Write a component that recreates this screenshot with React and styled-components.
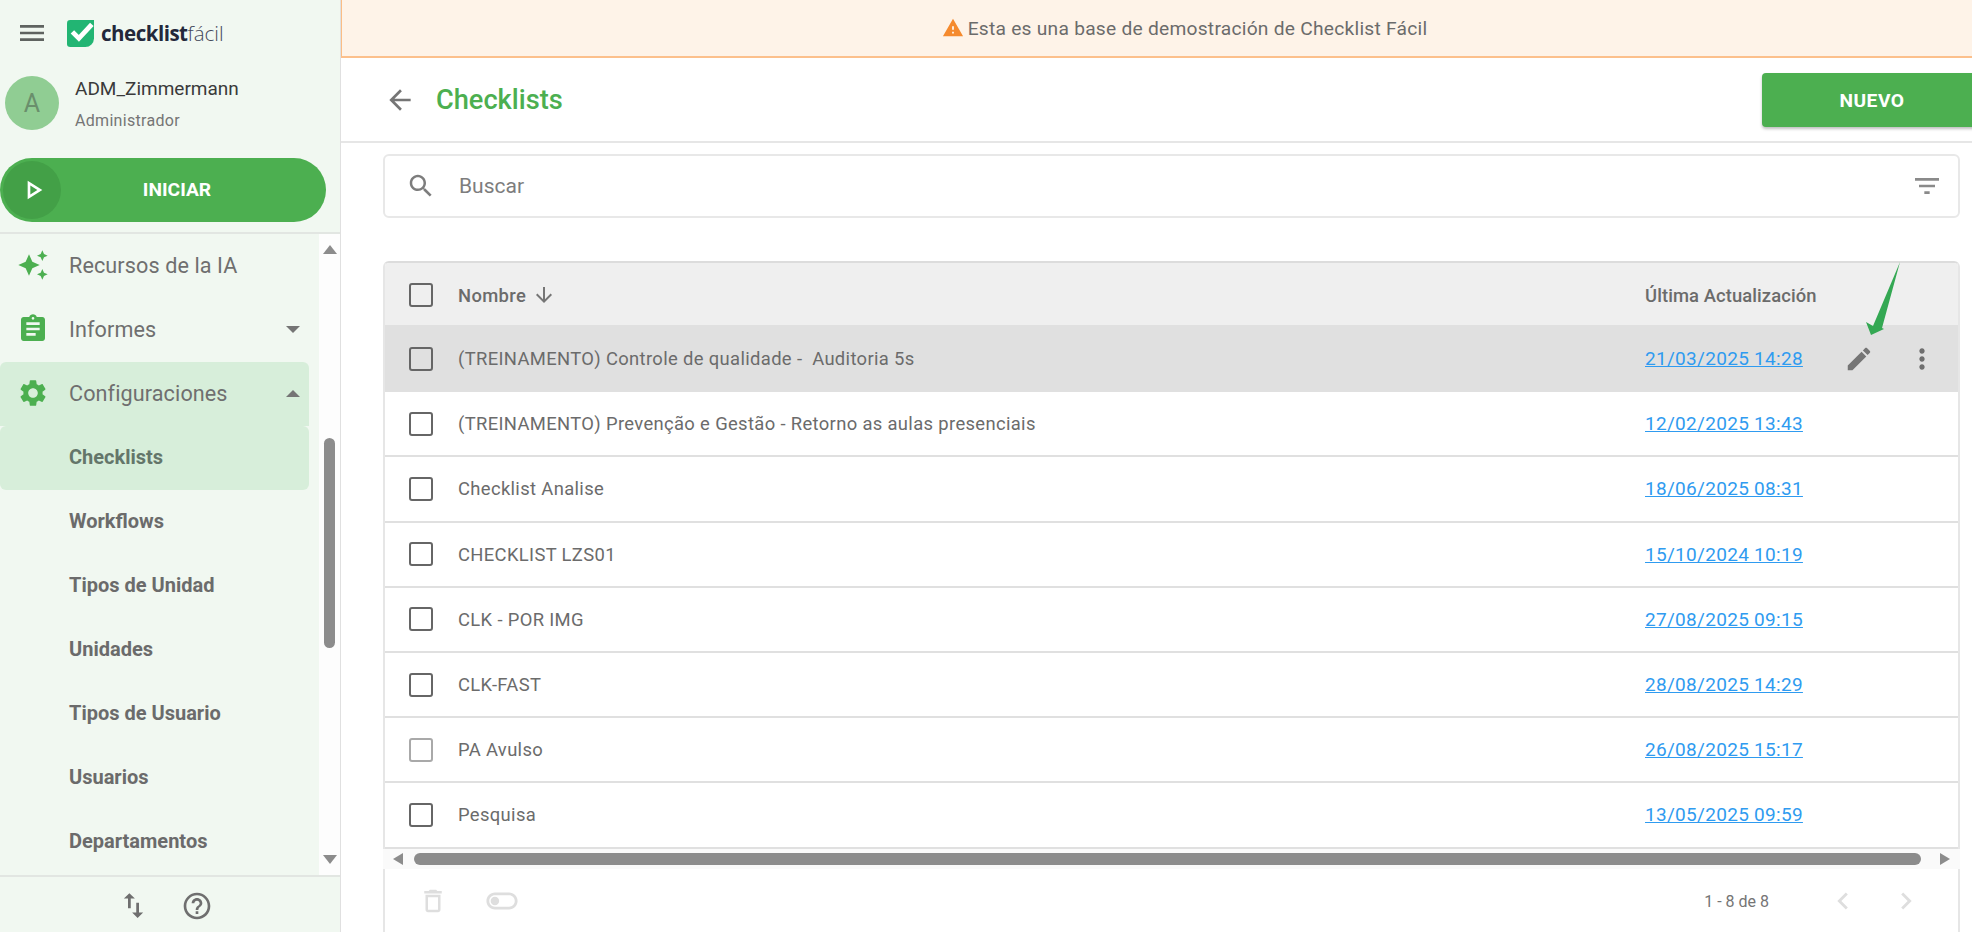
import React from 'react';
import styled, { createGlobalStyle } from 'styled-components';

const P = {
  menu: 'M3 18h18v-2H3v2zm0-5h18v-2H3v2zm0-7v2h18V6H3z',
  play: 'M10 8.64L15.27 12 10 15.36V8.64M8 5v14l11-7L8 5z',
  spark: 'M19 9l1.25-2.75L23 5l-2.75-1.25L19 1l-1.25 2.75L15 5l2.75 1.25L19 9zm-7.5.5L9 4 6.5 9.5 1 12l5.5 2.5L9 20l2.5-5.5L17 12l-5.5-2.5zM19 15l-1.25 2.75L15 19l2.75 1.25L19 23l1.25-2.75L23 19l-2.75-1.25L19 15z',
  assign: 'M19 3h-4.18C14.4 1.84 13.3 1 12 1c-1.3 0-2.4.84-2.82 2H5c-1.1 0-2 .9-2 2v14c0 1.1.9 2 2 2h14c1.1 0 2-.9 2-2V5c0-1.1-.9-2-2-2zm-7 0c.55 0 1 .45 1 1s-.45 1-1 1-1-.45-1-1 .45-1 1-1zm2 14H7v-2h7v2zm3-4H7v-2h10v2zm0-4H7V7h10v2z',
  gear: 'M19.14 12.94c.04-.3.06-.61.06-.94 0-.32-.02-.64-.07-.94l2.03-1.58c.18-.14.23-.41.12-.61l-1.92-3.32c-.12-.22-.37-.29-.59-.22l-2.39.96c-.5-.38-1.03-.7-1.62-.94l-.36-2.54c-.04-.24-.24-.41-.48-.41h-3.84c-.24 0-.43.17-.47.41l-.36 2.54c-.59.24-1.13.57-1.62.94l-2.39-.96c-.22-.08-.47 0-.59.22L2.74 8.87c-.12.21-.08.47.12.61l2.03 1.58c-.05.3-.09.63-.09.94s.02.64.07.94l-2.03 1.58c-.18.14-.23.41-.12.61l1.92 3.32c.12.22.37.29.59.22l2.39-.96c.5.38 1.03.7 1.62.94l.36 2.54c.05.24.24.41.48.41h3.84c.24 0 .44-.17.47-.41l.36-2.54c.59-.24 1.13-.56 1.62-.94l2.39.96c.22.08.47 0 .59-.22l1.92-3.32c.12-.22.07-.47-.12-.61l-2.01-1.58zM12 15.6c-1.98 0-3.6-1.62-3.6-3.6s1.62-3.6 3.6-3.6 3.6 1.62 3.6 3.6-1.62 3.6-3.6 3.6z',
  swap: 'M16 17.01V10h-2v7.01h-3L15 21l4-3.99h-3zM9 3L5 6.99h3V14h2V6.99h3L9 3z',
  help: 'M11 18h2v-2h-2v2zm1-16C6.48 2 2 6.48 2 12s4.48 10 10 10 10-4.48 10-10S17.52 2 12 2zm0 18c-4.41 0-8-3.59-8-8s3.59-8 8-8 8 3.59 8 8-3.59 8-8 8zm0-14c-2.21 0-4 1.79-4 4h2c0-1.1.9-2 2-2s2 .9 2 2c0 2-3 1.75-3 5h2c0-2.25 3-2.5 3-5 0-2.21-1.79-4-4-4z',
  back: 'M20 11H7.83l5.59-5.59L12 4l-8 8 8 8 1.41-1.41L7.83 13H20v-2z',
  search: 'M15.5 14h-.79l-.28-.27C15.41 12.59 16 11.11 16 9.5 16 5.91 13.09 3 9.5 3S3 5.91 3 9.5 5.91 16 9.5 16c1.61 0 3.09-.59 4.23-1.57l.27.28v.79l5 4.99L20.49 19l-4.99-5zm-6 0C7.01 14 5 11.99 5 9.5S7.01 5 9.5 5 14 7.01 14 9.5 11.99 14 9.5 14z',
  filter: 'M10 18h4v-2h-4v2zM3 6v2h18V6H3zm3 7h12v-2H6v2z',
  down: 'M20 12l-1.41-1.41L13 16.17V4h-2v12.17l-5.58-5.59L4 12l8 8 8-8z',
  edit: 'M3 17.25V21h3.75L17.81 9.94l-3.75-3.75L3 17.25zM20.71 7.04c.39-.39.39-1.02 0-1.41l-2.34-2.34c-.39-.39-1.02-.39-1.41 0l-1.83 1.83 3.75 3.75 1.83-1.83z',
  more: 'M12 8c1.1 0 2-.9 2-2s-.9-2-2-2-2 .9-2 2 .9 2 2 2zm0 2c-1.1 0-2 .9-2 2s.9 2 2 2 2-.9 2-2-.9-2-2-2zm0 6c-1.1 0-2 .9-2 2s.9 2 2 2 2-.9 2-2-.9-2-2-2z',
  trash: 'M6 19c0 1.1.9 2 2 2h8c1.1 0 2-.9 2-2V7H6v12zM8 9h8v10H8V9zm7.5-5l-1-1h-5l-1 1H5v2h14V4z',
  toggle: 'M17 6H7c-3.31 0-6 2.69-6 6s2.69 6 6 6h10c3.31 0 6-2.69 6-6s-2.69-6-6-6zm0 10H7c-2.21 0-4-1.79-4-4s1.79-4 4-4h10c2.21 0 4 1.79 4 4s-1.79 4-4 4zM7 9c-1.66 0-3 1.34-3 3s1.34 3 3 3 3-1.34 3-3-1.34-3-3-3z',
  left: 'M15.41 7.41L14 6l-6 6 6 6 1.41-1.41L10.83 12z',
  right: 'M10 6L8.59 7.41 13.17 12l-4.58 4.59L10 18l6-6z',
  warn: 'M1 21h22L12 2 1 21zm12-3h-2v-2h2v2zm0-4h-2v-4h2v4z',
};

const Icon = ({ d, size = 24, color = '#757575' }) => (
  <svg width={size} height={size} viewBox="0 0 24 24" fill={color} style={{ flex: 'none', display: 'block' }}>
    <path d={d} />
  </svg>
);

const Global = createGlobalStyle`
  html, body { margin: 0; padding: 0; height: 100%; overflow: hidden; background: #fff; }
  body { font-family: Roboto, "Liberation Sans", sans-serif; color: #6b6b6b; }
  * { box-sizing: border-box; }
`;

const Page = styled.div`
  display: grid;
  grid-template-columns: 341px 1fr;
  width: 1972px;
  height: 932px;
  overflow: hidden;
  position: relative;
`;

const Sidebar = styled.aside`
  display: flex;
  flex-direction: column;
  height: 932px;
  background: #f1f8f1;
  border-right: 1px solid #e0e0e0;
`;
const TopBar = styled.div`
  display: flex;
  align-items: center;
  height: 66px;
  padding: 0 0 0 16px;
`;
const LogoWrap = styled.div`
  display: flex;
  align-items: center;
  margin-left: 19px;
`;
const LogoText = styled.span`
  font-family: "Open Sans", sans-serif;
  font-size: 20.5px;
  font-weight: 700;
  letter-spacing: -0.5px;
  color: #23283a;
  margin-left: 7px;
  & > span { font-weight: 300; color: #44485a; letter-spacing: 0; }
`;
const UserBlock = styled.div`
  display: flex;
  align-items: flex-start;
  padding: 10px 0 0 5px;
  height: 92px;
`;
const Avatar = styled.div`
  width: 54px;
  height: 54px;
  border-radius: 50%;
  background: #90cd93;
  color: #6a8f6c;
  font-size: 25px;
  display: flex;
  align-items: center;
  justify-content: center;
  flex: none;
`;
const UserText = styled.div`
  margin-left: 16px;
  display: flex;
  flex-direction: column;
`;
const UserName = styled.div`
  font-size: 19px;
  line-height: 24px;
  color: #3a3a3a;
  margin-top: 1px;
`;
const UserRole = styled.div`
  font-size: 16px;
  letter-spacing: 0.3px;
  line-height: 20px;
  color: #757575;
  margin-top: 10px;
`;
const StartButton = styled.div`
  display: flex;
  align-items: center;
  width: 326px;
  height: 64px;
  border-radius: 32px;
  background: #4caf50;
  padding-left: 3px;
  flex: none;
`;
const PlayCircle = styled.div`
  width: 58px;
  height: 58px;
  border-radius: 50%;
  background: #43a047;
  display: flex;
  align-items: center;
  justify-content: center;
  flex: none;
  padding-left: 1px;
`;
const StartLabel = styled.div`
  flex: none;
  width: 227px;
  text-align: center;
  color: #fff;
  font-weight: 700;
  font-size: 19.2px;
  padding: 0 0 2px 5px;
`;
const NavArea = styled.div`
  display: flex;
  flex: 1;
  min-height: 0;
  margin-top: 10px;
  border-top: 2px solid #e2e6e2;
  border-bottom: 2px solid #e2e6e2;
`;
const NavList = styled.nav`
  width: 319px;
  flex: none;
  overflow: hidden;
`;
const NavRow = styled.div`
  display: flex;
  align-items: center;
  width: 309px;
  height: 64px;
  padding: 0 0 2px 17px;
  border-radius: ${(p) => (p.$first ? '6px 6px 0 0' : '0')};
  background: ${(p) => (p.$active ? '#d7eeda' : 'transparent')};
  color: #6f6f6f;
`;
const NavLabel = styled.span`
  margin-left: 20px;
  flex: 1;
  font-size: 21.6px;
  letter-spacing: 0.1px;
`;
const Caret = styled.span`
  width: 0;
  height: 0;
  margin-right: 9px;
  border-left: 7px solid transparent;
  border-right: 7px solid transparent;
  ${(p) => (p.$up ? 'border-bottom: 7px solid #757575;' : 'border-top: 7px solid #757575;')}
`;
const SubRow = styled.div`
  display: flex;
  align-items: center;
  width: 309px;
  height: 64px;
  padding: 0 0 2px 69px;
  font-size: 20px;
  font-weight: 700;
  color: ${(p) => (p.$active ? '#64766a' : '#6b6b6b')};
  background: ${(p) => (p.$active ? '#d7eeda' : 'transparent')};
  border-radius: ${(p) => (p.$active ? '6px' : '0')};
`;
const VBar = styled.div`
  width: 21px;
  flex: none;
  background: #fdfdfd;
  display: flex;
  flex-direction: column;
  align-items: center;
  padding-top: 11px;
`;
const VThumb = styled.div`
  width: 11px;
  height: 210px;
  margin-top: 184px;
  border-radius: 6px;
  background: #8c8c8c;
`;
const VArrow = styled.span`
  width: 0;
  height: 0;
  border-left: 7px solid transparent;
  border-right: 7px solid transparent;
  ${(p) => (p.$up ? 'border-bottom: 9px solid #8c8c8c;' : 'border-top: 9px solid #8c8c8c; margin-top: auto; margin-bottom: 11px;')}
`;
const SideFooter = styled.div`
  height: 55px;
  flex: none;
  display: flex;
  align-items: center;
  justify-content: center;
  gap: 31px;
  padding: 2px 10px 0 0;
`;

const Main = styled.main`
  display: flex;
  flex-direction: column;
  min-width: 0;
  height: 932px;
`;
const Banner = styled.div`
  height: 58px;
  flex: none;
  background: #fef3e8;
  border-left: 1px solid #fbbd85;
  border-bottom: 2px solid #fcc08c;
  display: flex;
  align-items: center;
  justify-content: center;
  gap: 4px;
  font-size: 19.2px;
  letter-spacing: 0.25px;
  color: #6b6b6b;
  padding-left: 55px;
`;
const Header = styled.header`
  height: 85px;
  flex: none;
  display: flex;
  align-items: center;
  padding-left: 43px;
  border-bottom: 2px solid #e6e6e6;
`;
const Title = styled.h1`
  margin: 0 0 0 20px;
  font-size: 27.2px;
  font-weight: 500;
  color: #4caf50;
  flex: 1;
`;
const NewButton = styled.button`
  width: 220px;
  height: 54px;
  margin-right: -10px;
  margin-top: 1px;
  border: 0;
  border-radius: 4px 0 0 4px;
  background: #4caf50;
  color: #fff;
  font-family: inherit;
  font-size: 19.2px;
  font-weight: 700;
  letter-spacing: 0.5px;
  padding: 0;
  box-shadow: 0 2px 3px rgba(0, 0, 0, 0.25);
`;
const Content = styled.div`
  flex: 1;
  display: flex;
  flex-direction: column;
  min-height: 0;
  padding: 11px 12px 0 42px;
`;
const SearchBox = styled.div`
  height: 64px;
  flex: none;
  display: flex;
  align-items: center;
  padding: 0 15px 0 21px;
  border: 2px solid #e8e8e8;
  border-radius: 6px;
`;
const SearchText = styled.span`
  flex: 1;
  margin-left: 23px;
  font-size: 21px;
  color: #7d7d7d;
`;
const TableCard = styled.section`
  margin-top: 43px;
  flex: 1;
  display: flex;
  flex-direction: column;
  min-height: 0;
  border-left: 2px solid #e6e6e6;
  border-right: 2px solid #e6e6e6;
  border-top: 2px solid #dcdcdc;
  border-radius: 6px 6px 0 0;
`;
const HeadRow = styled.div`
  height: 64px;
  flex: none;
  display: flex;
  align-items: center;
  padding-left: 24px;
  padding-top: 2px;
  background: #efefef;
  border-bottom: 2px solid #e0e0e0;
  border-radius: 4px 4px 0 0;
  font-size: 18.4px;
  font-weight: 500;
  color: #6b6b6b;
`;
const Row = styled.div`
  height: 65.2px;
  flex: none;
  display: flex;
  align-items: center;
  padding-left: 24px;
  background: ${(p) => (p.$hover ? '#e0e0e0' : '#fff')};
  border-bottom: 2px solid #e0e0e0;
  font-size: 18.4px;
  color: #6b6b6b;
`;
const Check = styled.span`
  width: 24px;
  height: 24px;
  flex: none;
  border: 2px solid ${(p) => (p.$muted ? '#a9a9a9' : '#666')};
  border-radius: 3px;
  margin-right: 25px;
`;
const NameCell = styled.div`
  width: 1187px;
  flex: none;
  letter-spacing: 0.35px;
  white-space: pre;
  display: flex;
  align-items: center;
`;
const SortIcon = styled.span`
  margin-left: 6px;
  display: flex;
`;
const DateLink = styled.a`
  flex: none;
  color: #2f9bf0;
  text-decoration: underline;
  font-size: 19px;
  letter-spacing: 0.3px;
`;
const HeadDate = styled.span`
  flex: none;
  letter-spacing: 0.1px;
`;
const RowActions = styled.div`
  display: flex;
  align-items: center;
  margin-left: 41px;
  gap: 32px;
`;
const HScroll = styled.div`
  height: 20px;
  flex: none;
  margin: 0 -2px;
  background: #fafafa;
  display: flex;
  align-items: center;
  padding: 0 10px;
`;
const HArrow = styled.span`
  width: 0;
  height: 0;
  flex: none;
  border-top: 6px solid transparent;
  border-bottom: 6px solid transparent;
  ${(p) => (p.$left ? 'border-right: 10px solid #8c8c8c;' : 'border-left: 10px solid #8c8c8c;')}
`;
const HThumb = styled.div`
  height: 12px;
  width: 1510px;
  margin-left: 11px;
  margin-right: 19px;
  border-radius: 6px;
  background: #8c8c8c;
`;
const Foot = styled.div`
  flex: 1;
  display: flex;
  align-items: center;
  padding: 2px 0 0 33px;
  font-size: 16px;
  color: #757575;
`;
const FootLeft = styled.div`
  display: flex;
  align-items: center;
  gap: 37px;
  flex: 1;
`;
const FootRight = styled.div`
  display: flex;
  align-items: center;
`;
const Pager = styled.div`
  display: flex;
  align-items: center;
  gap: 29px;
  margin: 0 35px 0 57px;
`;
const Annotation = styled.svg`
  position: absolute;
  left: 1850px;
  top: 255px;
  width: 60px;
  height: 90px;
  pointer-events: none;
`;

const rows = [
  ['(TREINAMENTO) Controle de qualidade -  Auditoria 5s', '21/03/2025 14:28'],
  ['(TREINAMENTO) Prevenção e Gestão - Retorno as aulas presenciais', '12/02/2025 13:43'],
  ['Checklist Analise', '18/06/2025 08:31'],
  ['CHECKLIST LZS01', '15/10/2024 10:19'],
  ['CLK - POR IMG', '27/08/2025 09:15'],
  ['CLK-FAST', '28/08/2025 14:29'],
  ['PA Avulso', '26/08/2025 15:17'],
  ['Pesquisa', '13/05/2025 09:59'],
];
const subs = ['Workflows', 'Tipos de Unidad', 'Unidades', 'Tipos de Usuario', 'Usuarios', 'Departamentos'];

export default function App() {
  return (
    <Page>
      <Global />
      <Sidebar>
        <TopBar>
          <Icon d={P.menu} size={32} color="#5f6360" />
          <LogoWrap>
            <svg width="27" height="27" viewBox="1 1 25 25">
              <path d="M4 1h22v17a8 8 0 0 1-8 8H4a3 3 0 0 1-3-3V4a3 3 0 0 1 3-3z" fill="#22b573" />
              <path d="M6 12l6 6L24 5" fill="none" stroke="#fff" strokeWidth="4.5" />
            </svg>
            <LogoText>checklist<span>fácil</span></LogoText>
          </LogoWrap>
        </TopBar>
        <UserBlock>
          <Avatar>A</Avatar>
          <UserText>
            <UserName>ADM_Zimmermann</UserName>
            <UserRole>Administrador</UserRole>
          </UserText>
        </UserBlock>
        <StartButton>
          <PlayCircle><Icon d={P.play} size={32} color="#fff" /></PlayCircle>
          <StartLabel>INICIAR</StartLabel>
        </StartButton>
        <NavArea>
          <NavList>
            <NavRow><Icon d={P.spark} size={32} color="#4caf50" /><NavLabel>Recursos de la IA</NavLabel></NavRow>
            <NavRow><Icon d={P.assign} size={32} color="#4caf50" /><NavLabel>Informes</NavLabel><Caret /></NavRow>
            <NavRow $active $first><Icon d={P.gear} size={32} color="#4caf50" /><NavLabel>Configuraciones</NavLabel><Caret $up /></NavRow>
            <SubRow $active>Checklists</SubRow>
            {subs.map((s) => <SubRow key={s}>{s}</SubRow>)}
          </NavList>
          <VBar>
            <VArrow $up />
            <VThumb />
            <VArrow />
          </VBar>
        </NavArea>
        <SideFooter>
          <Icon d={P.swap} size={33} color="#6f6f6f" />
          <Icon d={P.help} size={32} color="#6f6f6f" />
        </SideFooter>
      </Sidebar>
      <Main>
        <Banner>
          <Icon d={P.warn} size={22} color="#f58a2e" />
          Esta es una base de demostración de Checklist Fácil
        </Banner>
        <Header>
          <Icon d={P.back} size={32} color="#757575" />
          <Title>Checklists</Title>
          <NewButton>NUEVO</NewButton>
        </Header>
        <Content>
          <SearchBox>
            <Icon d={P.search} size={30} color="#7d7d7d" />
            <SearchText>Buscar</SearchText>
            <Icon d={P.filter} size={32} color="#8a8a8a" />
          </SearchBox>
          <TableCard>
            <HeadRow>
              <Check />
              <NameCell>Nombre<SortIcon><Icon d={P.down} size={24} color="#757575" /></SortIcon></NameCell>
              <HeadDate>Última Actualización</HeadDate>
            </HeadRow>
            {rows.map(([name, date], i) => (
              <Row key={name} $hover={i === 0}>
                <Check $muted={name === 'PA Avulso'} />
                <NameCell>{name}</NameCell>
                <DateLink>{date}</DateLink>
                {i === 0 && (
                  <RowActions>
                    <Icon d={P.edit} size={30} color="#757575" />
                    <Icon d={P.more} size={32} color="#6f6f6f" />
                  </RowActions>
                )}
              </Row>
            ))}
            <HScroll>
              <HArrow $left />
              <HThumb />
              <HArrow />
            </HScroll>
            <Foot>
              <FootLeft>
                <Icon d={P.trash} size={30} color="#dedede" />
                <Icon d={P.toggle} size={34} color="#dedede" />
              </FootLeft>
              <FootRight>
                1 - 8 de 8
                <Pager>
                  <Icon d={P.left} size={34} color="#dedede" />
                  <Icon d={P.right} size={34} color="#dedede" />
                </Pager>
              </FootRight>
            </Foot>
          </TableCard>
        </Content>
      </Main>
      <Annotation viewBox="0 0 60 90">
        <polygon points="50,7 32,73 34,74 21,80 16,67 23,71" fill="#34a853" />
      </Annotation>
    </Page>
  );
}
